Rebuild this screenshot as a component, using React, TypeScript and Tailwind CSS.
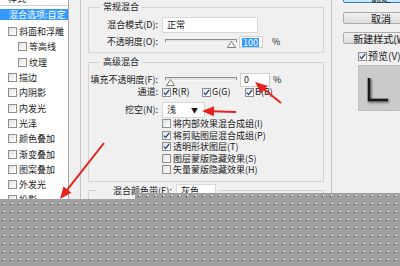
import clsx from "clsx";

const effects = [
  { label: "斜面和浮雕" },
  { label: "等高线", sub: true },
  { label: "纹理", sub: true },
  { label: "描边" },
  { label: "内阴影" },
  { label: "内发光" },
  { label: "光泽" },
  { label: "颜色叠加" },
  { label: "渐变叠加" },
  { label: "图案叠加" },
  { label: "外发光" },
  { label: "投影" },
];

const advanced = [
  { label: "将内部效果混合成组(I)", on: false },
  { label: "将剪贴图层混合成组(P)", on: true },
  { label: "透明形状图层(T)", on: true },
  { label: "图层蒙版隐藏效果(S)", on: false },
  { label: "矢量蒙版隐藏效果(H)", on: false },
];

function Check({ on = false }: { on?: boolean }) {
  return (
    <span className="flex h-[9px] w-[9px] shrink-0 items-center justify-center border border-[#8e8f8f] bg-gradient-to-br from-[#e2e2e2] to-white">
      {on && (
        <svg width="7" height="7" viewBox="0 0 7 7">
          <path d="M0.8 3.6 L2.7 5.6 L6.2 0.8" fill="none" stroke="#21408a" strokeWidth="1.3" />
        </svg>
      )}
    </span>
  );
}

function Slider({ end = false }: { end?: boolean }) {
  return (
    <div className="relative h-[12px] w-[72px]">
      <div className="absolute left-0 right-0 top-[3px] h-[4px] rounded-[1px] border border-[#8c8c8c] border-b-[#f8f8f8] bg-[#e4e4e4]" />
      <svg
        className={clsx("absolute top-[5px]", end ? "right-[1px]" : "left-[1px]")}
        width="9"
        height="7"
        viewBox="0 0 9 7"
      >
        <path d="M4.5 0.5 L8.5 6.5 H0.5 Z" fill="#fdfdfd" stroke="#7a7a7a" />
      </svg>
    </div>
  );
}

function Label({ children }: { children: React.ReactNode }) {
  return <div className="w-[69px] shrink-0 text-right">{children}</div>;
}

function Arrow({ x1, y1, x2, y2 }: { x1: number; y1: number; x2: number; y2: number }) {
  const dx = x2 - x1;
  const dy = y2 - y1;
  const len = Math.hypot(dx, dy);
  const ux = dx / len;
  const uy = dy / len;
  const bx = x2 - ux * 12;
  const by = y2 - uy * 12;
  const pts = `${x2},${y2} ${bx - uy * 5},${by + ux * 5} ${bx + uy * 5},${by - ux * 5}`;
  return (
    <g>
      <line x1={x1} y1={y1} x2={bx + ux * 2} y2={by + uy * 2} stroke="#e5231b" strokeWidth="2" />
      <polygon points={pts} fill="#e5231b" />
    </g>
  );
}

export default function App() {
  return (
    <div className="relative h-[266px] w-[400px] overflow-hidden bg-[#f0f0f0] font-['Noto_Sans_CJK_SC','Noto_Sans',sans-serif] text-[9px] text-[#1a1a1a]">
      <div className="flex h-full">
        {/* effect list */}
        <div className="flex w-[69px] shrink-0 flex-col border-r border-[#a9a9a9] bg-white">
          <div className="mt-[-7px] h-[12px] pl-[8px] leading-[12px]">样式</div>
          <div className="h-px bg-[#cfcfcf]" />
          <div className="mt-[3px] h-[11px] bg-[#3399ff] pl-[9px] leading-[11px] text-white">混合选项:自定</div>
          <div className="mt-[4px] flex flex-col">
            {effects.map((e) => (
              <div
                key={e.label}
                className={clsx("flex h-[15.3px] items-center gap-[2px]", e.sub ? "pl-[18px]" : "pl-[8px]")}
              >
                <Check />
                <span className="leading-none">{e.label}</span>
              </div>
            ))}
          </div>
        </div>

        {/* main panel */}
        <div className="ml-[11px] flex w-[252px] shrink-0 flex-col border-x border-[#c4c4c4] px-[7px] pt-px">
          <fieldset className="flex flex-col border border-[#d3d3d3] px-0 pb-[4px] pt-0">
            <legend className="ml-[11px] px-[3px] leading-[12px]">常规混合</legend>
            <div className="mt-[4px] flex h-[16px] items-center gap-[4px]">
              <Label>混合模式(D):</Label>
              <div className="flex h-[16px] w-[96px] items-center border border-[#d8d8d8] bg-white pl-[4px]">正常</div>
            </div>
            <div className="mt-[3px] flex h-[12px] items-center">
              <Label>不透明度(O):</Label>
              <div className="ml-[7px]">
                <Slider end />
              </div>
              <div className="ml-[2px] flex h-[12px] w-[24px] items-center border border-[#d0d0d0] bg-white pl-[2px]">
                <span className="bg-[#3399ff] px-px leading-[9px] text-white">100</span>
              </div>
              <span className="ml-[9px]">%</span>
            </div>
          </fieldset>

          <fieldset className="mt-[3px] flex flex-col border border-[#d3d3d3] px-0 pb-[5px] pt-0">
            <legend className="ml-[11px] px-[3px] leading-[12px]">高级混合</legend>
            <div className="mt-[5px] flex h-[13px] items-center">
              <Label>填充不透明度(F):</Label>
              <div className="ml-[7px]">
                <Slider />
              </div>
              <div className="ml-[3px] flex h-[14px] w-[30px] items-center border border-[#d0d0d0] bg-white pl-[3px]">0</div>
              <span className="ml-[3px]">%</span>
            </div>
            <div className="flex h-[12px] items-center gap-[4px]">
              <Label>通道:</Label>
              {[
                ["R(R)", "w-[36px]"],
                ["G(G)", "w-[39px]"],
                ["B(B)", "w-[36px]"],
              ].map(([t, w]) => (
                <div key={t} className={clsx("flex items-center gap-[1px]", w)}>
                  <Check on />
                  <span>{t}</span>
                </div>
              ))}
            </div>
            <div className="mt-[4px] flex h-[16px] items-center gap-[4px]">
              <Label>挖空(N):</Label>
              <div className="flex h-[16px] w-[43px] items-center justify-between border border-[#d8d8d8] bg-white pl-[4px] pr-[6px]">
                <span>浅</span>
                <span className="text-[7px]">▼</span>
              </div>
            </div>
            <div className="flex flex-col pl-[73px]">
              {advanced.map((a) => (
                <div key={a.label} className="flex h-[11.5px] items-center gap-[2px]">
                  <Check on={a.on} />
                  <span>{a.label}</span>
                </div>
              ))}
            </div>
          </fieldset>

          <fieldset className="mt-[2px] flex h-[40px] flex-col border border-[#d3d3d3] px-0 pt-0">
            <legend className="ml-[8px] flex items-center gap-[4px] pl-[16px] pr-[3px]">
              <span>混合颜色带(E):</span>
              <span className="flex h-[12px] w-[40px] items-center border border-[#d8d8d8] bg-white pl-[4px]">灰色</span>
            </legend>
          </fieldset>
        </div>

        {/* buttons */}
        <div className="flex flex-1 flex-col pl-[11px]">
          <div className="mt-[-9px] flex h-[12px] w-[76px] shrink-0 items-center justify-center rounded-[2px] border border-[#3c7fb1] bg-gradient-to-b from-[#eaf6fd] to-[#bee6fd] text-[10px]">确定</div>
          <div className="mt-[9px] flex h-[12px] w-[76px] shrink-0 items-center justify-center rounded-[2px] border border-[#acacac] bg-gradient-to-b from-[#f2f2f2] to-[#dcdcdc] text-[10px]">取消</div>
          <div className="mt-[8px] flex h-[12px] w-[76px] shrink-0 items-center justify-center whitespace-nowrap rounded-[2px] border border-[#acacac] bg-gradient-to-b from-[#f2f2f2] to-[#dcdcdc] text-[10px]">新建样式(W)</div>
          <div className="mt-[6px] flex items-center gap-[1px] pl-[15px]">
            <Check on />
            <span className="text-[10px] leading-[12px]">预览(V)</span>
          </div>
          <div className="ml-[15px] mt-[3px] flex h-[46px] w-[60px] shrink-0 items-start border border-[#bdbdbd] bg-[#cbcbcb]">
            <svg width="40" height="44" viewBox="0 0 40 44">
              <defs>
                <filter id="soft" x="-50%" y="-50%" width="200%" height="200%">
                  <feGaussianBlur stdDeviation="0.8" />
                </filter>
              </defs>
              <path d="M11 13 V35 H30" fill="none" stroke="#777" strokeWidth="4" filter="url(#soft)" />
              <path d="M10 12 V34 H29" fill="none" stroke="#1a1a1a" strokeWidth="2.5" />
            </svg>
          </div>
        </div>
      </div>

      {/* annotations */}
      <svg className="pointer-events-none absolute inset-0" width="400" height="266">
        <Arrow x1={104} y1={143} x2={60} y2={199} />
        <Arrow x1={281} y1={103} x2={255} y2={82} />
        <Arrow x1={236} y1={112} x2={202} y2={111} />
      </svg>

      {/* mosaic cover */}
      <svg className="pointer-events-none absolute inset-0" width="400" height="266">
        <defs>
          <pattern id="dots" width="8" height="8" patternUnits="userSpaceOnUse">
            <rect width="8" height="8" fill="#9f9f9f" />
            <rect x="3" y="3" width="1" height="1" fill="#ffffff" />
            <rect x="2" y="4" width="1" height="1" fill="#3a3a3a" />
            <rect x="4" y="3" width="1" height="1" fill="#cfcfcf" />
          </pattern>
        </defs>
        <polygon points="0,199 135,199 135,193 400,193 400,266 0,266" fill="url(#dots)" />
      </svg>
    </div>
  );
}
